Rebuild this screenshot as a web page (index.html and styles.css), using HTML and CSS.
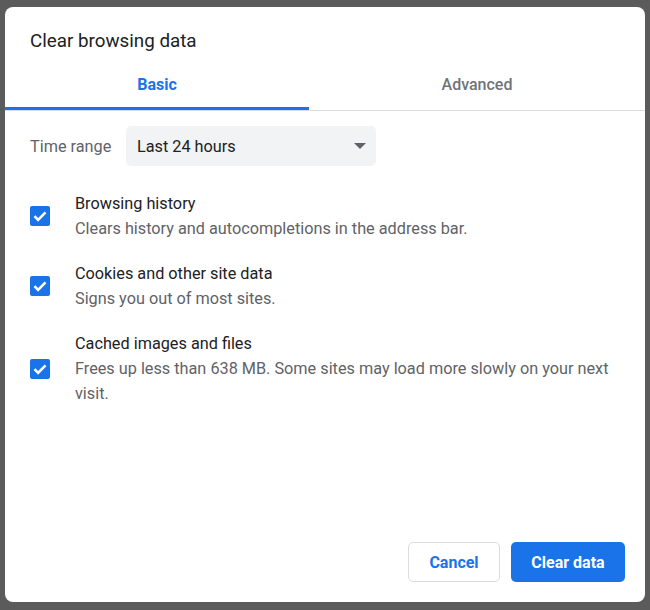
FILE: index.html
```html
<!DOCTYPE html>
<html>
<head>
<meta charset="utf-8">
<link rel="stylesheet" href="styles.css">
</head>
<body>
<div class="dialog">
  <div class="title">Clear browsing data</div>
  <div class="tabs">
    <div class="tab tab-basic active">Basic</div>
    <div class="tab tab-advanced">Advanced</div>
  </div>
  <div class="content">
    <div class="range-row">
      <span class="range-label">Time range</span>
      <div class="select">
        <span>Last 24 hours</span>
        <svg class="arrow" width="12" height="6" viewBox="0 0 12 6"><path d="M0 0H12L6 6Z" fill="#5f6368"/></svg>
      </div>
    </div>
    <div class="items">
      <div class="item">
        <div class="checkbox"><svg width="20" height="20" viewBox="0 0 20 20"><path d="M4.5 10.2l3.6 3.6 7.4-7.4" fill="none" stroke="#fff" stroke-width="2.6"/></svg></div>
        <div class="text">
          <div class="item-title">Browsing history</div>
          <div class="item-sub">Clears history and autocompletions in the address bar.</div>
        </div>
      </div>
      <div class="item">
        <div class="checkbox"><svg width="20" height="20" viewBox="0 0 20 20"><path d="M4.5 10.2l3.6 3.6 7.4-7.4" fill="none" stroke="#fff" stroke-width="2.6"/></svg></div>
        <div class="text">
          <div class="item-title">Cookies and other site data</div>
          <div class="item-sub">Signs you out of most sites.</div>
        </div>
      </div>
      <div class="item">
        <div class="checkbox"><svg width="20" height="20" viewBox="0 0 20 20"><path d="M4.5 10.2l3.6 3.6 7.4-7.4" fill="none" stroke="#fff" stroke-width="2.6"/></svg></div>
        <div class="text">
          <div class="item-title">Cached images and files</div>
          <div class="item-sub">Frees up less than 638 MB. Some sites may load more slowly on your next visit.</div>
        </div>
      </div>
    </div>
  </div>
  <div class="footer">
    <button class="btn btn-cancel">Cancel</button>
    <button class="btn btn-primary">Clear data</button>
  </div>
</div>
</body>
</html>
```
FILE: styles.css
```css
html, body {
  margin: 0;
  padding: 0;
}
body {
  width: 650px;
  height: 610px;
  background: #5b5b5b;
  font-family: Roboto, "Liberation Sans", sans-serif;
  overflow: hidden;
  padding-top: 7px;
  box-sizing: border-box;
}
.dialog {
  margin-left: 5px;
  width: 640px;
  height: 595px;
  background: #fff;
  border-radius: 8px;
  display: flex;
  flex-direction: column;
}
.title {
  padding: 22px 25px 0;
  font-size: 18.8px;
  line-height: 24px;
  color: #202124;
  height: 24px;
}
.tabs {
  margin-top: 5px;
  display: flex;
  border-bottom: 1px solid #dadce0;
}
.tab {
  height: 52px;
  line-height: 53px;
  text-align: center;
  font-size: 16px;
  font-weight: 500;
  color: #6f7378;
  box-sizing: border-box;
}
.tab-basic { width: 304px; }
.tab-advanced { width: 336px; }
.tab.active {
  color: #1a73e8;
  font-weight: 700;
  box-shadow: inset 0 -3px 0 #1a73e8;
}
.content {
  padding: 15px 0 0 25px;
}
.range-row {
  display: flex;
  align-items: center;
  height: 40px;
}
.range-label {
  font-size: 16.25px;
  color: #5f6368;
  width: 96px;
}
.select {
  width: 250px;
  height: 40px;
  background: #f1f3f4;
  border-radius: 5px;
  display: flex;
  align-items: center;
  justify-content: space-between;
  padding: 0 10px 0 11px;
  box-sizing: border-box;
  font-size: 16.25px;
  color: #202124;
}
.arrow { display: block; }
.items {
  margin-top: 25px;
  display: flex;
  flex-direction: column;
  gap: 20px;
}
.item {
  display: flex;
  align-items: center;
}
.checkbox {
  width: 20px;
  height: 20px;
  background: #1a73e8;
  border-radius: 2px;
  flex: none;
}
.checkbox svg { display: block; }
.text {
  margin-left: 25px;
  width: 545px;
  font-size: 16.25px;
  line-height: 25px;
}
.item-title { color: #202124; }
.item-sub { color: #5f6368; }
.footer {
  margin-top: auto;
  display: flex;
  justify-content: flex-end;
  gap: 11px;
  padding: 0 20px 20px;
}
.btn {
  height: 40px;
  border-radius: 5px;
  font-family: Roboto, "Liberation Sans", sans-serif;
  font-size: 16px;
  font-weight: 700;
  padding: 0;
  cursor: pointer;
}
.btn-cancel {
  width: 92px;
  background: #fff;
  color: #1a73e8;
  border: 1px solid #dadce0;
}
.btn-primary {
  width: 114px;
  background: #1a73e8;
  color: #fff;
  border: none;
}
```
